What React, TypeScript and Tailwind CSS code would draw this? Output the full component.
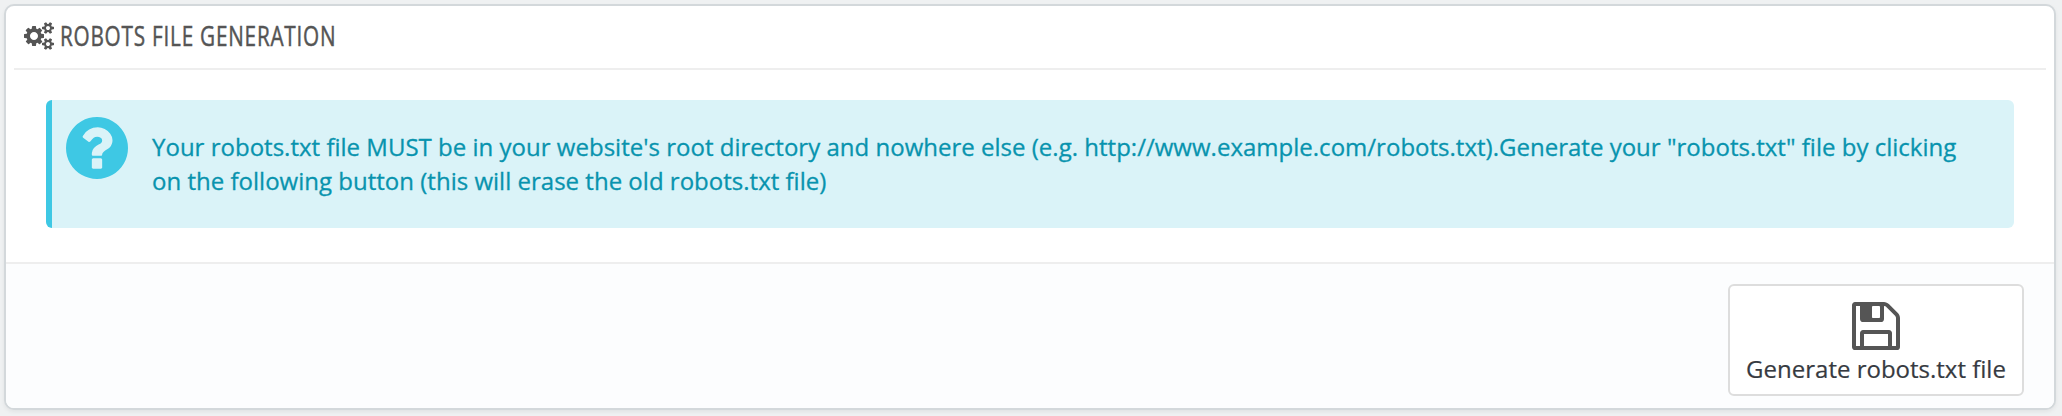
function CogsIcon() {
  return (
    <svg viewBox="-64 0 1920 1792" className="h-[28px] w-[30px] shrink-0" fill="currentColor" aria-hidden="true">
      <path d="M832 896q0-106-75-181t-181-75-181 75-75 181 75 181 181 75 181-75 75-181zm768 512q0-52-38-90t-90-38-90 38-38 90q0 53 37.5 90.5t90.5 37.5 90.5-37.5 37.5-90.5zm0-1024q0-52-38-90t-90-38-90 38-38 90q0 53 37.5 90.5t90.5 37.5 90.5-37.5 37.5-90.5zm-384 421v185q0 10-7 19.5t-16 10.5l-155 24q-11 35-32 76 34 48 90 115 7 11 7 20 0 12-7 19-23 30-82.5 89.5t-78.5 59.5q-11 0-21-7l-115-90q-37 19-77 31-11 108-23 155-7 24-30 24h-186q-11 0-20-7.5t-10-17.5l-23-153q-34-10-75-31l-118 89q-7 7-20 7-11 0-21-8-144-133-144-160 0-9 7-19 10-14 41-53t47-61q-23-44-35-82l-152-24q-10-1-17-9.5t-7-19.5v-185q0-10 7-19.5t16-10.5l155-24q11-35 32-76-34-48-90-115-7-11-7-20 0-12 7-20 22-30 82-89t79-59q11 0 21 7l115 90q34-18 77-32 11-108 23-154 7-24 30-24h186q11 0 20 7.5t10 17.5l23 153q34 10 75 31l118-89q8-7 20-7 11 0 21 8 144 133 144 160 0 8-7 19-12 16-42 54t-45 60q23 48 34 82l152 23q10 2 17 10.5t7 19.5zm640 533v140q0 16-149 31-12 27-30 52 51 113 51 138 0 4-4 7-122 71-124 71-8 0-46-47t-52-68q-20 2-30 2t-30-2q-14 21-52 68t-46 47q-2 0-124-71-4-3-4-7 0-25 51-138-18-25-30-52-149-15-149-31v-140q0-16 149-31 13-29 30-52-51-113-51-138 0-4 4-7 4-2 35-20t59-34 30-16q8 0 46 46.5t52 67.5q20-2 30-2t30 2q51-71 92-112l6-2q4 0 124 70 4 3 4 7 0 25-51 138 17 23 30 52 149 15 149 31zm0-1024v140q0 16-149 31-12 27-30 52 51 113 51 138 0 4-4 7-122 71-124 71-8 0-46-47t-52-68q-20 2-30 2t-30-2q-14 21-52 68t-46 47q-2 0-124-71-4-3-4-7 0-25 51-138-18-25-30-52-149-15-149-31v-140q0-16 149-31 13-29 30-52-51-113-51-138 0-4 4-7 4-2 35-20t59-34 30-16q8 0 46 46.5t52 67.5q20-2 30-2t30 2q51-71 92-112l6-2q4 0 124 70 4 3 4 7 0 25-51 138 17 23 30 52 149 15 149 31z" />
    </svg>
  );
}

function QuestionIcon() {
  return (
    <svg viewBox="128 128 1536 1536" className="size-[62px] shrink-0 text-[#3ec8e4]" fill="currentColor" aria-hidden="true">
      <path d="M1024 1376v-192q0-14-9-23t-23-9h-192q-14 0-23 9t-9 23v192q0 14 9 23t23 9h192q14 0 23-9t9-23zm256-672q0-88-55.5-163t-138.5-116-170-41q-243 0-371 213-15 24 8 42l132 100q7 6 19 6 16 0 25-12 53-68 86-92 34-24 86-24 48 0 85.5 26t37.5 59q0 38-20 61t-68 45q-63 28-115.5 86.5t-52.5 125.5v36q0 14 9 23t23 9h192q14 0 23-9t9-23q0-19 21.5-49.5t54.5-49.5q32-18 49-28.5t46-35 44.5-48 28-60.5 12.5-81zm384 192q0 209-103 385.5t-279.5 279.5-385.5 103-385.5-103-279.5-279.5-103-385.5 103-385.5 279.5-279.5 385.5-103 385.5 103 279.5 279.5 103 385.5z" />
    </svg>
  );
}

function SaveIcon() {
  return (
    <svg viewBox="128 128 1536 1536" className="size-[48px] text-[#555]" fill="currentColor" aria-hidden="true">
      <path d="M512 1536h768v-384h-768v384zm896 0h128v-896q0-14-10-38.5t-20-34.5l-281-281q-10-10-34-20t-39-10v416q0 40-28 68t-68 28h-576q-40 0-68-28t-28-68v-416h-128v1280h128v-416q0-40 28-68t68-28h832q40 0 68 28t28 68v416zm-384-928v-320q0-13-9.5-22.5t-22.5-9.5h-192q-13 0-22.5 9.5t-9.5 22.5v320q0 13 9.5 22.5t22.5 9.5h192q13 0 22.5-9.5t9.5-22.5zm640 32v928q0 40-28 68t-68 28h-1344q-40 0-68-28t-28-68v-1344q0-40 28-68t68-28h928q40 0 88 20t76 48l280 280q28 28 48 76t20 88z" />
    </svg>
  );
}

export default function App() {
  return (
    <div className="h-[416px] bg-[#eff1f2] pt-1 pr-[6px] pl-1 font-['Open_Sans',sans-serif]">
      <section className="flex h-[406px] flex-col overflow-hidden rounded-[10px] border-2 border-[#d3d8db] bg-white shadow-[0_2px_4px_rgba(0,0,0,0.06)]">
        <header className="mx-2 flex h-16 shrink-0 items-center border-b-2 border-[#eee] pb-[2px] pl-[10px] text-[#555]">
          <CogsIcon />
          <h3 className="mb-[2px] ml-[6px] origin-left scale-x-[0.74] text-[28px] leading-none font-medium tracking-[1.05px] whitespace-nowrap [-webkit-text-stroke:0.5px]">
            ROBOTS FILE GENERATION
          </h3>
        </header>
        <div className="mx-10 mt-[30px] flex h-32 shrink-0 rounded-[6px] border-l-[6px] border-[#3ec8e4] bg-[#daf3f8] pt-[17px] pl-[14px]">
          <QuestionIcon />
          <p className="mt-[13px] ml-6 w-[1824px] text-[24px] leading-[34px] tracking-[0.012px] text-[#0893ae] [-webkit-text-stroke:0.3px]">
            Your robots.txt file MUST be in your website's root directory and nowhere else (e.g.
            http://www.example.com/robots.txt).Generate your "robots.txt" file by clicking on the following button
            (this will erase the old robots.txt file)
          </p>
        </div>
        <footer className="mt-[34px] flex flex-1 items-start justify-end border-t-2 border-[#eee] bg-[#fcfdfe] pt-5 pr-[30px]">
          <button className="flex h-28 w-[296px] flex-col items-center rounded-[6px] border-2 border-[#ddd] bg-white pt-4 text-[#363a41]">
            <SaveIcon />
            <span className="mt-[2px] text-[24px] leading-[34px] whitespace-nowrap [-webkit-text-stroke:0.2px]">
              Generate robots.txt file
            </span>
          </button>
        </footer>
      </section>
    </div>
  );
}
